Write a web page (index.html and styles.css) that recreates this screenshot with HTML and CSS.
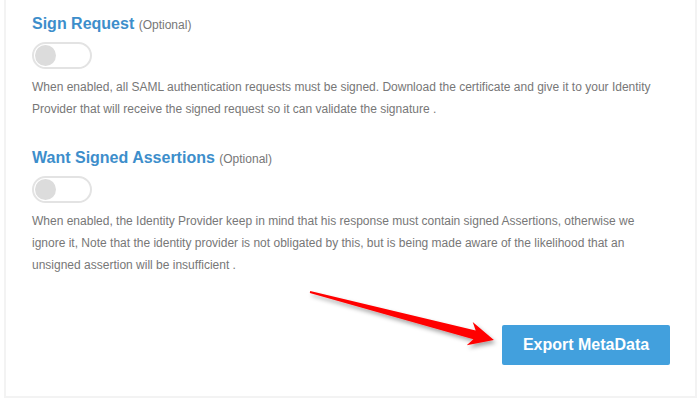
FILE: index.html
```html
<!DOCTYPE html>
<html>
<head>
<meta charset="utf-8">
<link rel="stylesheet" href="styles.css">
</head>
<body>
<div class="page">
  <div class="panel">
    <section class="option">
      <h3 class="option-title">Sign Request <span class="optional">(Optional)</span></h3>
      <div class="toggle"><span class="knob"></span></div>
      <p class="desc">When enabled, all SAML authentication requests must be signed. Download the certificate and give it to your Identity Provider that will receive the signed request so it can validate the signature .</p>
    </section>
    <section class="option">
      <h3 class="option-title">Want Signed Assertions <span class="optional">(Optional)</span></h3>
      <div class="toggle"><span class="knob"></span></div>
      <p class="desc">When enabled, the Identity Provider keep in mind that his response must contain signed Assertions, otherwise we ignore it, Note that the identity provider is not obligated by this, but is being made aware of the likelihood that an unsigned assertion will be insufficient .</p>
    </section>
    <div class="actions">
      <button class="btn-export">Export MetaData</button>
    </div>
  </div>
  <svg class="arrow" width="700" height="408" viewBox="0 0 700 408">
    <defs>
      <filter id="shadow" x="-10%" y="-50%" width="130%" height="200%">
        <feDropShadow dx="2" dy="3" stdDeviation="2" flood-color="#000" flood-opacity="0.35"/>
      </filter>
    </defs>
    <polygon filter="url(#shadow)" fill="#ff0000" points="310.2,291 475.7,330.6 472.7,322.1 493.9,340 466.7,345.3 473.4,339.3 309.8,293"/>
  </svg>
</div>
</body>
</html>
```

FILE: styles.css
```css
html, body {
  margin: 0;
  padding: 0;
  background: #ffffff;
}
body {
  font-family: "Liberation Sans", Arial, sans-serif;
}
.page {
  position: relative;
  width: 700px;
  height: 408px;
  overflow: hidden;
  padding-left: 4px;
  box-sizing: border-box;
}
.panel {
  width: 693px;
  box-sizing: border-box;
  border: 2px solid #f3f3f3;
  border-top: none;
  padding: 14px 25px 31px 26px;
  background: #fff;
}
.option {
  display: flex;
  flex-direction: column;
  align-items: flex-start;
}
.option + .option {
  margin-top: 28px;
}
.option-title {
  margin: 0;
  font-size: 16px;
  line-height: 20px;
  font-weight: bold;
  color: #3d8ecb;
}
.optional {
  font-size: 12px;
  font-weight: normal;
  color: #777777;
}
.toggle {
  margin-top: 7px;
  width: 60px;
  height: 27px;
  box-sizing: border-box;
  border: 2px solid #e3e3e3;
  border-radius: 14px;
  background: #fff;
  display: flex;
  align-items: center;
  padding-left: 1px;
}
.knob {
  width: 21px;
  height: 21px;
  border-radius: 50%;
  background: #dcdcdc;
}
.desc {
  margin: 7px 0 0 0;
  font-size: 12px;
  line-height: 22px;
  color: #777777;
}
.actions {
  display: flex;
  justify-content: flex-end;
  margin-top: 49px;
}
.btn-export {
  width: 168px;
  height: 40px;
  border: none;
  border-radius: 2px;
  background: #42a0dd;
  color: #ffffff;
  font-family: "Liberation Sans", Arial, sans-serif;
  font-size: 16px;
  font-weight: bold;
  padding: 0;
}
.arrow {
  position: absolute;
  left: 0;
  top: 0;
  pointer-events: none;
}
```
